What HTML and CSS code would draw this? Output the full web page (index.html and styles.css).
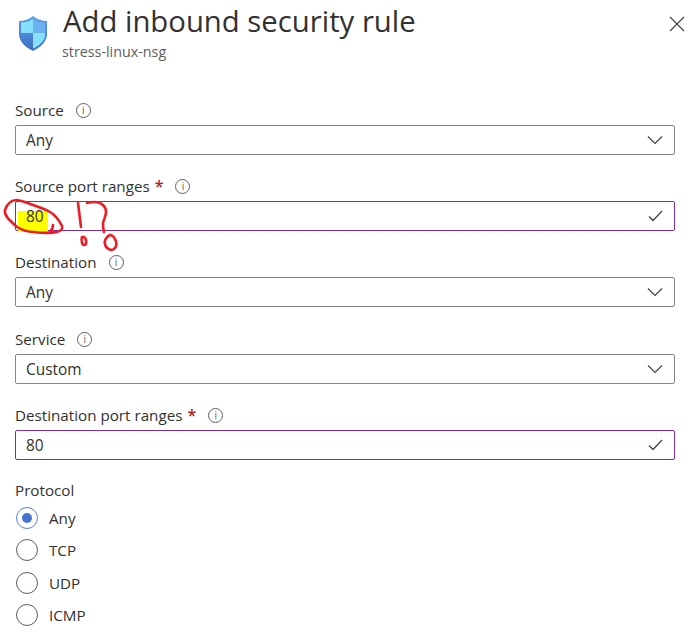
FILE: index.html
```html
<!DOCTYPE html>
<html lang="en">
<head>
<meta charset="utf-8">
<title>Add inbound security rule</title>
<link rel="stylesheet" href="styles.css">
</head>
<body>
<div class="panel">
  <header class="header">
    <svg class="shield" width="32" height="38" viewBox="0 0 32 38">
      <defs>
        <linearGradient id="sg" x1="0" y1="0" x2="0" y2="1"><stop offset="0" stop-color="#5ea0ef"/><stop offset="1" stop-color="#3b6fc0"/></linearGradient>
      </defs>
      <path d="M16 1C12 4.500 7 6 2 6V19C2 27 9 32.500 16 36C23 32.500 30 27 30 19V6C25 6 20 4.500 16 1Z" fill="url(#sg)"/>
      <path d="M16 3.500V18H4V7.500C8 7.500 12.500 6.500 16 3.500Z" fill="#84e0fb"/>
      <path d="M16 18H28V20C28 26 22 31 16 33.500Z" fill="#84e0fb"/>
      <path d="M16 3.500C19.500 6.500 24 7.500 28 7.500V18H16Z" fill="#6cb0f0"/>
    </svg>
    <div class="titles">
      <h1 class="title">Add inbound security rule</h1>
      <div class="subtitle">stress-linux-nsg</div>
    </div>
    <svg class="close" width="16" height="16" viewBox="0 0 16 16"><path d="M1 1L15 15M15 1L1 15" stroke="#444" stroke-width="1.200" fill="none"/></svg>
  </header>

  <div class="field">
    <div class="label">Source<span class="info">i</span></div>
    <div class="box"><span class="value">Any</span><svg class="chev" width="16" height="10" viewBox="0 0 16 10"><path d="M1 1.500L8 8.500L15 1.500" stroke="#444" stroke-width="1.200" fill="none"/></svg></div>
  </div>

  <div class="field">
    <div class="label">Source port ranges<span class="req">*</span><span class="info">i</span></div>
    <div class="box valid"><span class="value marked">80</span><svg class="check" width="15" height="12" viewBox="0 0 15 12"><path d="M1 6.500L5 10.500L14 1" stroke="#444" stroke-width="1.300" fill="none"/></svg></div>
  </div>

  <div class="field">
    <div class="label">Destination<span class="info">i</span></div>
    <div class="box"><span class="value">Any</span><svg class="chev" width="16" height="10" viewBox="0 0 16 10"><path d="M1 1.500L8 8.500L15 1.500" stroke="#444" stroke-width="1.200" fill="none"/></svg></div>
  </div>

  <div class="field">
    <div class="label">Service<span class="info">i</span></div>
    <div class="box"><span class="value">Custom</span><svg class="chev" width="16" height="10" viewBox="0 0 16 10"><path d="M1 1.500L8 8.500L15 1.500" stroke="#444" stroke-width="1.200" fill="none"/></svg></div>
  </div>

  <div class="field">
    <div class="label">Destination port ranges<span class="req">*</span><span class="info">i</span></div>
    <div class="box valid"><span class="value">80</span><svg class="check" width="15" height="12" viewBox="0 0 15 12"><path d="M1 6.500L5 10.500L14 1" stroke="#444" stroke-width="1.300" fill="none"/></svg></div>
  </div>

  <div class="group">
    <div class="label">Protocol</div>
    <div class="radio"><span class="dot on"></span>Any</div>
    <div class="radio"><span class="dot"></span>TCP</div>
    <div class="radio"><span class="dot"></span>UDP</div>
    <div class="radio"><span class="dot"></span>ICMP</div>
  </div>
</div>

<svg class="scribble" width="120" height="60" viewBox="0 198 120 60">
  <g fill="none" stroke="#ee1c25" stroke-width="2.600" stroke-linecap="round" stroke-linejoin="round">
    <path d="M17 200C11 200 7 204 5 210C4 215 8 219 17 227C22 230 28 232 33 232C42 233 52 233 57 232C61 231 63 229 62 226C59 220 55 215 50 212C45 209 39 207 33 205C28 203 23 201 17 200Z"/>
    <path d="M53 225C53 228 52 230 50 232"/>
    <path d="M78 203C79 211 80 219 81 227"/>
    <path d="M87 203C91 202 97 202 100 203C104 205 106 208 106 212C106 216 104 219 103 223C103 226 103 229 104 232"/>
    <path d="M82 237C81 240 82 245 84 245C87 245 87 239 84 237Z"/>
    <path d="M110 235C106 237 104 241 105 244C106 249 111 251 114 249C117 247 117 242 115 239C114 237 112 235 110 235Z"/>
  </g>
</svg>
</body>
</html>
```

FILE: styles.css
```css
* { box-sizing: border-box; }
html, body { margin: 0; padding: 0; }
body {
  width: 690px;
  height: 632px;
  overflow: hidden;
  background: #fff;
  font-family: "Open Sans", "Noto Sans", sans-serif;
  color: #323130;
  position: relative;
}
.panel { padding: 0 15px; }
.header { display: flex; align-items: flex-start; height: 100px; position: relative; }
.shield { margin: 15px 14px 0 2px; flex: none; }
.titles { flex: 1; }
.title {
  margin: 0;
  font-size: 29.300px;
  font-weight: 400;
  line-height: 42px;
  color: #323130;
  white-space: nowrap;
}
.subtitle { margin-top: 0; margin-left: -1px; font-size: 14.300px; line-height: 20px; color: #605e5c; }
.close { position: absolute; right: -10px; top: 16px; }
.field { height: 76.200px; }
.label { height: 25px; padding-bottom: 4px; font-size: 15.200px; line-height: 21px; color: #323130; display: flex; align-items: center; }
.req { color: #a4262c; margin-left: 5px; font-size: 16px; font-weight: 600; }
.info {
  width: 15px; height: 15px; margin-left: 12px;
  border: 1px solid #605e5c; border-radius: 50%;
  font-size: 10px; line-height: 13px; text-align: center; color: #605e5c;
  flex: none;
}
.box {
  height: 30px; border: 1px solid #8a8886; border-radius: 2px;
  display: flex; align-items: center; justify-content: space-between;
  padding: 0 11px 0 10px;
  font-size: 15.400px;
}
.valid { border-color: #7b2fa0; }
.value { line-height: 20px; margin-top: 2px; }
.marked {
  margin: 7px 0 0 -8px;
  padding: 0 4px 5px 8px;
  background: linear-gradient(transparent 4px, #ffff00 4px);
}
.group { margin-top: -1px; }
.group .label { height: 22px; padding-bottom: 0; }
.radio { display: flex; align-items: center; height: 32.300px; font-size: 15.200px; }
.dot {
  width: 22px; height: 22px; margin: 0 11px 0 1px; border: 1px solid #605e5c; border-radius: 50%;
  display: flex; align-items: center; justify-content: center; flex: none;
}
.dot.on { border-color: #5b84d6; }
.dot.on::after { content: ""; width: 10px; height: 10px; border-radius: 50%; background: #4472d0; }
.scribble { position: absolute; left: 0; top: 198px; }
```
